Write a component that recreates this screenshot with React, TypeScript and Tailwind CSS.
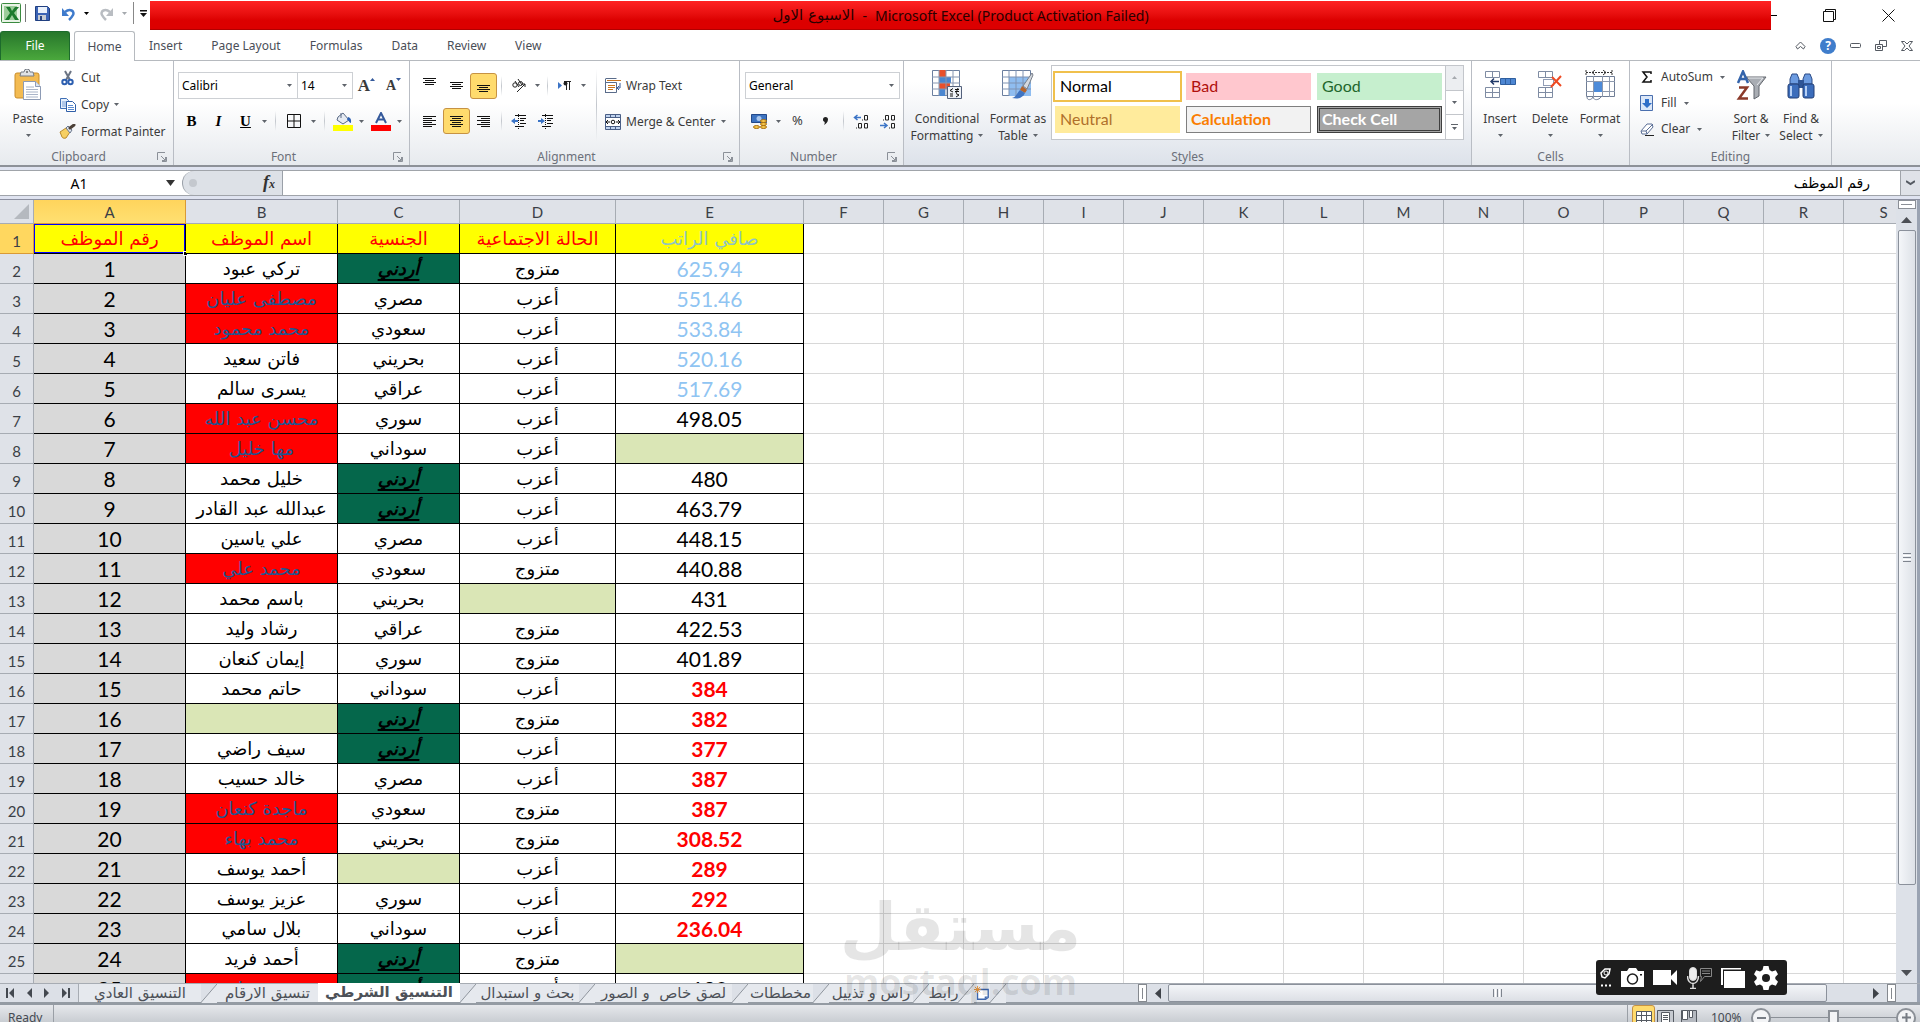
import React from "react";

type Cell = string | null;

interface Row {
  name: Cell;
  nameHit?: boolean;
  nation: Cell;
  status: Cell;
  salary: Cell;
}

const rows: Row[] = [
  { name: "تركي عبود", nation: "أردني", status: "متزوج", salary: "625.94" },
  { name: "مصطفى عليان", nameHit: true, nation: "مصري", status: "أعزب", salary: "551.46" },
  { name: "محمد محمود", nameHit: true, nation: "سعودي", status: "أعزب", salary: "533.84" },
  { name: "فاتن سعيد", nation: "بحريني", status: "أعزب", salary: "520.16" },
  { name: "يسرى سالم", nation: "عراقي", status: "أعزب", salary: "517.69" },
  { name: "محسن عبد الله", nameHit: true, nation: "سوري", status: "أعزب", salary: "498.05" },
  { name: "مها خليل", nameHit: true, nation: "سوداني", status: "أعزب", salary: null },
  { name: "خليل محمد", nation: "أردني", status: "أعزب", salary: "480" },
  { name: "عبدالله عبد القادر", nation: "أردني", status: "أعزب", salary: "463.79" },
  { name: "علي ياسين", nation: "مصري", status: "أعزب", salary: "448.15" },
  { name: "محمد علي", nameHit: true, nation: "سعودي", status: "متزوج", salary: "440.88" },
  { name: "باسم محمد", nation: "بحريني", status: null, salary: "431" },
  { name: "رشاد وليد", nation: "عراقي", status: "متزوج", salary: "422.53" },
  { name: "إيمان كنعان", nation: "سوري", status: "متزوج", salary: "401.89" },
  { name: "حاتم محمد", nation: "سوداني", status: "أعزب", salary: "384" },
  { name: null, nation: "أردني", status: "متزوج", salary: "382" },
  { name: "سيف راضي", nation: "أردني", status: "أعزب", salary: "377" },
  { name: "خالد حسيب", nation: "مصري", status: "أعزب", salary: "387" },
  { name: "ماجدة كنعان", nameHit: true, nation: "سعودي", status: "متزوج", salary: "387" },
  { name: "محمد بهاء", nameHit: true, nation: "بحريني", status: "متزوج", salary: "308.52" },
  { name: "أحمد يوسف", nation: null, status: "أعزب", salary: "289" },
  { name: "عزيز يوسف", nation: "سوري", status: "أعزب", salary: "292" },
  { name: "بلال سامي", nation: "سوداني", status: "أعزب", salary: "236.04" },
  { name: "أحمد فريد", nation: "أردني", status: "متزوج", salary: null },
  { name: "محمد علي", nameHit: true, nation: "أردني", status: "أعزب", salary: "190" },
];

const dataColumns = ["A", "B", "C", "D", "E"];
const emptyColumns = ["F", "G", "H", "I", "J", "K", "L", "M", "N", "O", "P", "Q", "R", "S"];
const headings = ["رقم الموظف", "اسم الموظف", "الجنسية", "الحالة الاجتماعية", "صافي الراتب"];

const Caret = ({ className = "text-[#5f646b]" }: { className?: string }) => (
  <svg width="5" height="3" viewBox="0 0 5 3" className={`shrink-0 ${className}`}>
    <path d="M0 0h5L2.5 3z" fill="currentColor" />
  </svg>
);

const CaretButton = ({ label }: { label: string }) => (
  <button aria-label={label} className="flex h-[26px] w-[11px] items-center justify-center">
    <Caret />
  </button>
);

const Sep = ({ className = "w-[10px]" }: { className?: string }) => (
  <span className={`flex h-[20px] justify-center ${className}`}>
    <span className="w-px bg-gradient-to-b from-transparent via-[#c3c7cd] to-transparent" />
  </span>
);

interface ToolProps {
  label: string;
  active?: boolean;
  className?: string;
  children: React.ReactNode;
}

const Tool: React.FC<ToolProps> = ({ label, active, className = "w-[27px]", children }) => (
  <button
    aria-label={label}
    className={`flex h-[26px] shrink-0 items-center justify-center rounded-[3px] ${
      active ? "border border-[#c69243] bg-[#ffdb6d]" : ""
    } ${className}`}
  >
    {children}
  </button>
);

interface BigToolProps {
  lines: string[];
  className: string;
  children: React.ReactNode;
}

const BigTool: React.FC<BigToolProps> = ({ lines, className, children }) => (
  <button className={`flex shrink-0 flex-col items-center pt-[8px] ${className}`}>
    <span className="flex h-[32px] items-center">{children}</span>
    <span className="mt-[9px] whitespace-nowrap leading-[17px]">{lines[0]}</span>
    <span className="flex h-[17px] items-center gap-[5px] whitespace-nowrap leading-[17px]">
      {lines[1]}
      <Caret />
    </span>
  </button>
);

interface GroupProps {
  title: string;
  className: string;
  launcher?: boolean;
  children: React.ReactNode;
}

const Group: React.FC<GroupProps> = ({ title, className, launcher, children }) => (
  <section className={`flex shrink-0 flex-col border-r border-[#b9bdc4] ${className}`}>
    <div className="flex flex-1">{children}</div>
    <div className="flex h-[16px] items-center leading-[16px] text-[#6b707a]">
      <span className="flex-1 text-center">{title}</span>
      {launcher && (
        <button aria-label={`${title} settings`} className="mr-[6px]">
          <svg width="10" height="10" viewBox="0 0 10 10" fill="none" stroke="#8b9098">
            <path d="M.5 8V.5H8" />
            <path d="M4 4l4 4M8.500 5v3.500H5" />
            <path d="M5 9.500h4.500V5" />
          </svg>
        </button>
      )}
    </div>
  </section>
);

const Picker = ({ label, value, className }: { label: string; value: string; className: string }) => (
  <span className={`relative flex h-[27px] items-center border border-[#cdd0d4] bg-white ${className}`}>
    <select
      aria-label={label}
      defaultValue={value}
      className="h-full w-full appearance-none bg-transparent pl-[3px] text-black outline-none"
    >
      <option>{value}</option>
    </select>
    <span className="pointer-events-none absolute right-[5px]">
      <Caret />
    </span>
  </span>
);

const Lines = ({ rows: lineRows, top = 0 }: { rows: number[][]; top?: number }) => (
  <svg width="15" height="15" viewBox="0 0 15 15" stroke="#111">
    {lineRows.map(([x, w], i) => (
      <path key={i} d={`M${x} ${top + i * 2 + 0.5}h${w}`} />
    ))}
  </svg>
);

const BorderIcon = () => (
  <svg width="14" height="14" viewBox="0 0 14 14" fill="none" stroke="#111">
    <path d="M.5.5h13v13H.5zM7 0v14M0 7h14" />
  </svg>
);

const IndentIcon = ({ flip }: { flip?: boolean }) => (
  <svg width="16" height="15" viewBox="0 0 16 15">
    <path d="M4 1.500h11M9 4.500h6M9 6.500h4M9 9.500h6M4 12.500h9" stroke="#111" />
    <path d="M7.500 0v15" stroke="#111" strokeDasharray="1 1" />
    <path d={flip ? "M0 6h3V4l4 3-4 3V8H0z" : "M7 6H4V4L0 7l4 3V8h3z"} fill="#3b74c6" />
  </svg>
);

const PasteIcon = () => (
  <svg width="28" height="32" viewBox="0 0 28 32">
    <rect x="1" y="4" width="24" height="25" rx="2" fill="#f3bb52" stroke="#c98d2b" />
    <path d="M7 3h3a3 3 0 016 0h3l1 4H6z" fill="#dfe2e6" stroke="#777d86" />
    <circle cx="13" cy="3" r="1" fill="#666" />
    <path d="M9.500 12.500h12l5 5v13h-17z" fill="#fff" stroke="#8d9bb5" />
    <path d="M21.500 12.500v5h5" fill="#dce5f2" stroke="#8d9bb5" />
    <path d="M12 18h8M12 20.500h12M12 23h12M12 25.500h12M12 28h12" stroke="#a9b4c8" />
  </svg>
);

const CutIcon = () => (
  <svg width="14" height="16" viewBox="0 0 14 16" fill="none">
    <path d="M4 1l5 9M10 1L5 10" stroke="#6b7484" strokeWidth="2" />
    <circle cx="3.500" cy="12" r="2.200" stroke="#2d5fb0" strokeWidth="2" />
    <circle cx="9.500" cy="12" r="2.200" stroke="#2d5fb0" strokeWidth="2" />
  </svg>
);

const CopyIcon = () => (
  <svg width="16" height="14" viewBox="0 0 16 14">
    <path d="M.5.500h6l2 2v8h-8z" fill="#e6effb" stroke="#3f6fb5" />
    <path d="M2 4h5M2 6h5M2 8h5" stroke="#7ba0d6" />
    <path d="M6.500 3.500h6l3 3v7h-9z" fill="#fff" stroke="#2f5fa8" />
    <path d="M8 7.500h5M8 9.500h6M8 11.500h6" stroke="#5b8bd0" />
  </svg>
);

const PainterIcon = () => (
  <svg width="17" height="15" viewBox="0 0 17 15">
    <path d="M1 8l6-4 4 4-4 6c-3 1-4-1-4-1z" fill="#f6cf62" stroke="#b98a2d" />
    <path d="M7 4l2-2 4 4-2 3z" fill="#dfe5ee" stroke="#69768c" />
    <path d="M11 4l4-3" stroke="#4b4038" strokeWidth="3" strokeLinecap="round" />
  </svg>
);

const FillIcon = () => (
  <svg width="20" height="19" viewBox="0 0 20 19">
    <path d="M5 5l5-4 6 7-6 4-6-4z" fill="#e5eaf2" stroke="#5a6a85" />
    <path d="M8 6V1" stroke="#5a6a85" />
    <path d="M15 5c4 1 3 5 3 6-2 0-2-3-4-3z" fill="#2f62b5" />
    <path d="M0 13h20v6H0z" fill="#ff0" />
  </svg>
);

const FontColorIcon = () => (
  <svg width="20" height="19" viewBox="0 0 20 19">
    <path d="M5 11L10 1l5 10M7 7.500h6" fill="none" stroke="#34599b" strokeWidth="2" />
    <path d="M0 13h20v6H0z" fill="#f00" />
  </svg>
);

const WrapIcon = () => (
  <svg width="16" height="16" viewBox="0 0 16 16" fill="none">
    <path d="M.5 1v14M.5 4.500h11v10H.5M.5.500h11" stroke="#5a6c8a" />
    <path d="M2 2.500h14" stroke="#c9741c" />
    <path d="M3 7.500h7M3 9.500h7M3 11.500h5" stroke="#c9741c" />
    <path d="M15 5v5h-3m2-2l-2 2 2 2" stroke="#34599b" />
  </svg>
);

const MergeIcon = () => (
  <svg width="16" height="16" viewBox="0 0 16 16">
    <path d="M.5.500h15v15H.5z" fill="#bfd2ee" stroke="#4a5f86" />
    <path d="M.5 3.500h15M.5 12.500h15M5.500.500v3M10.500.500v3M5.500 12.500v3M10.500 12.500v3" stroke="#4a5f86" />
    <path d="M1 4h14v8H1z" fill="#fff" />
    <path d="M1 8h4M3 6L1 8l2 2M15 8h-4M13 6l2 2-2 2" stroke="#111" fill="none" />
    <circle cx="8" cy="8" r="1.800" fill="none" stroke="#111" />
  </svg>
);

const MoneyIcon = () => (
  <svg width="17" height="17" viewBox="0 0 17 17">
    <path d="M.5 1.500h15v8H.5z" fill="#3d73c0" stroke="#23498a" />
    <circle cx="8" cy="5.500" r="2.500" fill="#a9c7ee" />
    <ellipse cx="12.500" cy="8" rx="3" ry="1.500" fill="#f5c54a" stroke="#a86f10" />
    <ellipse cx="12.500" cy="11" rx="3" ry="1.500" fill="#f5c54a" stroke="#a86f10" />
    <ellipse cx="12.500" cy="14" rx="3" ry="1.500" fill="#f5c54a" stroke="#a86f10" />
    <ellipse cx="5.500" cy="14" rx="3" ry="1.500" fill="#f5c54a" stroke="#a86f10" />
  </svg>
);

const DecimalIcon = ({ more }: { more?: boolean }) => (
  <svg width="17" height="15" viewBox="0 0 17 15" fill="none">
    <g stroke="#222">
      {more ? (
        <path d="M9 6h1M11.500 1.500h3v4.500h-3zM3 14h1M5.500 9.500h3V14h-3zM11.500 9.500h3V14h-3z" />
      ) : (
        <path d="M3 6h1M5.500 1.500h3v4.500h-3zM11.500 1.500h3v4.500h-3zM9 14h1M11.500 9.500h3V14h-3z" />
      )}
    </g>
    <path
      d={more ? "M8 3.500H2M4.500 1L1.500 3.500l3 2.500" : "M0 11.500h6M4 9l3 2.500L4 14"}
      stroke="#3b74c6"
      strokeWidth="1.500"
    />
  </svg>
);

const ConditionalIcon = () => (
  <svg width="30" height="30" viewBox="0 0 30 30">
    <path d="M.5.500h27v25H.5z" fill="#fff" stroke="#6b7f9f" />
    <path d="M7 0h7v7H7zM7 13h11v6H7z" fill="#e8502b" />
    <path d="M7 7h12v6H7zM7 19h6v7H7z" fill="#4a86d0" />
    <path d="M0 7h28M0 13h28M0 19h28M7 0v26M14 0v26M21 0v26" stroke="#8797b2" />
    <path d="M15.500 16.500h14v12h-14z" fill="#eef2f8" stroke="#53617b" />
    <path d="M21 18.500l-3 2 3 1.500M18 24h3M18 26h3M23 19.500h4M23 21.500h4M26 18l-2 5M24 23.500l3 1.500-3 2" stroke="#111" fill="none" />
  </svg>
);

const FormatTableIcon = () => (
  <svg width="32" height="30" viewBox="0 0 32 30">
    <path d="M.5.500h28v25H.5z" fill="#fff" stroke="#6b7f9f" />
    <path d="M7 7h22v19H7z" fill="#8fbdf0" />
    <path d="M0 7h29M0 13h29M0 19h29M7 0v26M14 0v26M21 0v26" stroke="#7f93b3" />
    <path d="M30 3l-9 13 4 3 6-14z" fill="#d5d9df" stroke="#787f8a" />
    <path d="M20 16l5 4-2 3-5-3z" fill="#b5652b" />
    <path d="M18 20l5 3c-3 6-8 6-13 5 4-1 5-5 8-8z" fill="#3f74c2" />
  </svg>
);

const InsertCellsIcon = () => (
  <svg width="32" height="30" viewBox="0 0 32 30" fill="none">
    <path d="M1.500 1.500h14v6h-14zM8.500 1.500v6M1.500 17.500h14v10h-14zM8.500 17.500v10M1.500 22.500h14" fill="#fff" stroke="#7f8ca3" />
    <path d="M16.500 8.500h15v6h-15z" fill="#4d86d2" stroke="#2f5f9f" />
    <path d="M21.500 8.500v6M26.500 8.500v6" stroke="#2f5f9f" />
    <path d="M15 11.500H7M10 8.500l-3 3 3 3" stroke="#223a6a" strokeWidth="1.500" />
  </svg>
);

const DeleteCellsIcon = () => (
  <svg width="26" height="30" viewBox="0 0 26 30" fill="none">
    <path d="M1.500 1.500h14v6h-14zM8.500 1.500v6M1.500 17.500h14v10h-14zM8.500 17.500v10M1.500 22.500h14" fill="#fff" stroke="#7f8ca3" />
    <path d="M6.500 9.500h10v6h-10z" stroke="#223a6a" strokeDasharray="1 1" />
    <path d="M15 7l9 9M24 6l-10 11" stroke="#ee4a22" strokeWidth="2" />
  </svg>
);

const FormatCellsIcon = () => (
  <svg width="31" height="31" viewBox="0 0 31 31" fill="none">
    <path d="M1 2.500h26M1 0v5M27 0v5" stroke="#333" strokeDasharray="2 1" />
    <path d="M10 0l-3 2.500L10 5M18 0l3 2.500L18 5" stroke="#333" />
    <path d="M1.500 6.500h28v20h-28z" fill="#fff" stroke="#6f7d95" />
    <path d="M1 11.500h29M1 21.500h29M8.500 6v21M17.500 6v21M24.500 6v21" stroke="#8d99ae" />
    <path d="M9 12h8v10H9z" fill="#4d8bd9" />
    <path d="M2 27c0 4 5 3 6 0 1 4 6 3 8 0" stroke="#6f7d95" fill="#fff" />
  </svg>
);

const SortIcon = () => (
  <svg width="31" height="31" viewBox="0 0 31 31" fill="none">
    <path d="M10 7h20l-7 9v10l-5 3V16z" fill="#a9adb3" stroke="#63676e" />
    <path d="M12 8h15l-6 7" stroke="#e8eaee" />
    <path d="M2 13L7 1.500 12 13M4 9h6" stroke="#3464ab" strokeWidth="2.500" />
    <path d="M3 17.500h8L3 28.500h9" stroke="#8b3a2a" strokeWidth="2.500" />
  </svg>
);

const FindIcon = () => (
  <svg width="28" height="27" viewBox="0 0 28 27">
    <path d="M5 2h5l2 5v5H3V7zM18 2h5l2 5v5h-9V7z" fill="#6c9be0" stroke="#2a4a86" />
    <path d="M11 8h6v8h-6z" fill="#2f5596" />
    <rect x="1" y="12" width="11" height="14" rx="2" fill="#3c6dbb" stroke="#223f75" />
    <rect x="16" y="12" width="11" height="14" rx="2" fill="#3c6dbb" stroke="#223f75" />
    <path d="M4 14v10M19 14v10" stroke="#b5cff5" strokeWidth="2" />
  </svg>
);

const QuickAccess = () => (
  <div className="flex h-[26px] w-[150px] shrink-0 items-center self-start">
    <svg width="21" height="21" viewBox="0 0 21 21" className="ml-px">
      <rect x=".5" y=".5" width="19" height="19" rx="1" fill="#e9f3e6" stroke="#3a8a3f" />
      <path d="M3 3h13v14H3z" fill="#9ccc9a" />
      <path d="M5 4h4l2 4 3-4h4l-5 6 5 7h-4l-3-5-3 5H4l5-7z" fill="#1d7a2d" />
    </svg>
    <span className="ml-[3px] h-[18px] w-px bg-[#777]" />
    <button aria-label="Save" className="ml-[9px]">
      <svg width="15" height="15" viewBox="0 0 15 15">
        <path d="M.5.500h12l2 2v12H.5z" fill="#3b63b5" stroke="#203f80" />
        <path d="M3 1h9v6H3z" fill="#eaf1fb" />
        <path d="M3 9h8v5H3z" fill="#c6cbd3" />
        <path d="M5 10h2v4H5z" fill="#26437f" />
      </svg>
    </button>
    <button aria-label="Undo" className="ml-[12px]">
      <svg width="13" height="15" viewBox="0 0 13 15" fill="none">
        <path d="M3 6c5-4 10-1 8 3-1 2-3 4-4 5" stroke="#3f7bcc" strokeWidth="2.500" />
        <path d="M0 2v8h7z" fill="#3f7bcc" />
      </svg>
    </button>
    <button aria-label="Undo history" className="ml-[9px]">
      <Caret className="text-black" />
    </button>
    <button aria-label="Redo" className="ml-[11px]">
      <svg width="13" height="15" viewBox="0 0 13 15" fill="none">
        <path d="M10 6C5 2 0 5 2 9c1 2 3 4 4 5" stroke="#b9bdc2" strokeWidth="2.500" />
        <path d="M13 2v8H6z" fill="#b9bdc2" />
      </svg>
    </button>
    <button aria-label="Redo history" className="ml-[9px]">
      <Caret className="text-[#a5a9ae]" />
    </button>
    <span className="ml-[6px] h-[22px] w-px bg-[#888]" />
    <button aria-label="Customize toolbar" className="ml-[6px]">
      <svg width="7" height="7" viewBox="0 0 7 7">
        <path d="M0 0h7v1.500H0zM0 3h7L3.500 7z" fill="#111" />
      </svg>
    </button>
  </div>
);

const TitleBar = () => (
  <header className="flex h-[31px] shrink-0 items-center">
    <QuickAccess />
    <div className="flex h-[29px] flex-1 items-center justify-center gap-[8px] border-b border-[#b00000] bg-gradient-to-b from-[#ff2222] to-[#dc0000] to-70% text-[14px] text-[#2a0000]">
      <span dir="rtl" className="font-['DejaVu_Sans',sans-serif] text-[15px]">الاسبوع الاول</span>
      <span>-</span>
      <span>Microsoft Excel (Product Activation Failed)</span>
    </div>
    <div className="flex w-[149px] shrink-0 items-center">
      <button aria-label="Minimize" className="h-px w-[6px] bg-black" />
      <button aria-label="Restore" className="ml-[46px]">
        <svg width="13" height="13" viewBox="0 0 13 13" fill="none" stroke="#111">
          <path d="M.5 2.500h10v10H.5zM2.500 2V.500h10v10H11" />
        </svg>
      </button>
      <button aria-label="Close" className="ml-[46px]">
        <svg width="13" height="13" viewBox="0 0 13 13" fill="none" stroke="#111">
          <path d="M.5.500l12 12M12.500.500l-12 12" />
        </svg>
      </button>
    </div>
  </header>
);

const tabs = ["Insert", "Page Layout", "Formulas", "Data", "Review", "View"];

const TabRow = () => (
  <nav className="flex h-[30px] shrink-0 items-stretch border-b border-[#b6babf] text-[#4a4e57]">
    <button className="w-[70px] rounded-t-[3px] border border-b-0 border-[#1c6b2c] bg-gradient-to-b from-[#27772c] to-[#4aa83c] text-white">
      File
    </button>
    <button className="-mb-px ml-[4px] w-[61px] rounded-t-[3px] border border-b-0 border-[#b6babf] bg-white">
      Home
    </button>
    <div className="flex gap-[29px] pl-[14px]">
      {tabs.map((tab) => (
        <button key={tab}>{tab}</button>
      ))}
    </div>
    <div className="ml-auto flex items-center gap-[14px] pr-[7px]">
      <svg width="11" height="9" viewBox="0 0 11 9" fill="#fff" stroke="#555a62">
        <path d="M5.500 1L1 5.500 2.500 8l3-2.500 3 2.500L10 5.500z" />
      </svg>
      <button
        aria-label="Help"
        className="flex h-[16px] w-[16px] items-center justify-center rounded-full bg-[#3f7dcb] font-bold text-white"
      >
        ?
      </button>
      <svg width="11" height="6" viewBox="0 0 11 6" fill="none" stroke="#555a62">
        <rect x=".5" y=".5" width="10" height="4" rx="1" />
      </svg>
      <svg width="12" height="11" viewBox="0 0 12 11" fill="none" stroke="#555a62">
        <path d="M.5 4.500h7v6h-7zM2.500 6.500h3v2h-3zM4.500 4V.500h7v6H8" />
      </svg>
      <svg width="12" height="10" viewBox="0 0 12 10" fill="#fff" stroke="#555a62">
        <path d="M.5.500h3L6 3 8.500.500h3L8 5l3.500 4.500h-3L6 7 3.500 9.500h-3L4 5z" />
      </svg>
    </div>
  </nav>
);

const StyleSwatch = ({ name, className }: { name: string; className: string }) => (
  <button className={`h-[27px] w-[125px] text-left font-['Lato',sans-serif] text-[16px] leading-[20px] ${className}`}>
    {name}
  </button>
);

const Ribbon = () => (
  <div className="flex h-[106px] shrink-0 border-b-2 border-[#8d9198] bg-gradient-to-b from-white from-40% to-[#e7eaee] text-[#3b3b3b]">
    <Group title="Clipboard" launcher className="w-[174px]">
      <BigTool lines={["Paste", ""]} className="w-[56px]">
        <PasteIcon />
      </BigTool>
      <div className="flex flex-col pl-[3px] pt-[4px]">
        <button className="flex h-[26px] items-center gap-[5px]">
          <span className="flex w-[17px] justify-center"><CutIcon /></span>
          Cut
        </button>
        <button className="flex h-[27px] items-center gap-[5px]">
          <span className="flex w-[17px] justify-center"><CopyIcon /></span>
          Copy
          <Caret />
        </button>
        <button className="flex h-[27px] items-center gap-[5px] whitespace-nowrap">
          <PainterIcon />
          Format Painter
        </button>
      </div>
    </Group>

    <Group title="Font" launcher className="w-[236px]">
      <div className="flex flex-col gap-[9px] pl-[4px] pt-[11px]">
        <div className="flex items-center">
          <Picker label="Font name" value="Calibri" className="w-[120px]" />
          <Picker label="Font size" value="14" className="-ml-px w-[56px]" />
          <Tool label="Grow font">
            <span className="font-['Liberation_Serif',serif] text-[17px] font-bold">A</span>
            <svg width="5" height="3" viewBox="0 0 5 3" className="mb-[12px]"><path d="M0 3h5L2.500 0z" fill="#34599b" /></svg>
          </Tool>
          <Tool label="Shrink font">
            <span className="font-['Liberation_Serif',serif] text-[14px] font-bold">A</span>
            <svg width="5" height="3" viewBox="0 0 5 3" className="mb-[12px]"><path d="M0 0h5L2.500 3z" fill="#34599b" /></svg>
          </Tool>
        </div>
        <div className="flex items-center font-['Liberation_Serif',serif] text-[15px] text-black">
          <Tool label="Bold"><b>B</b></Tool>
          <Tool label="Italic"><b><i>I</i></b></Tool>
          <Tool label="Underline"><b className="underline">U</b></Tool>
          <CaretButton label="Underline style" />
          <Sep />
          <Tool label="Borders" className="w-[28px]"><BorderIcon /></Tool>
          <CaretButton label="Border style" />
          <Sep />
          <Tool label="Fill colour"><FillIcon /></Tool>
          <CaretButton label="More fill colours" />
          <Tool label="Font colour"><FontColorIcon /></Tool>
          <CaretButton label="More font colours" />
        </div>
      </div>
    </Group>

    <Group title="Alignment" launcher className="w-[330px]">
      <div className="flex w-[186px] flex-col gap-[9px] pl-[6px] pt-[11px]">
        <div className="flex h-[27px] items-center">
          <Tool label="Top align"><Lines rows={[[1, 13], [3, 9], [1, 13], [3, 9]]} /></Tool>
          <Tool label="Middle align"><Lines top={4} rows={[[1, 13], [3, 9], [1, 13], [3, 9]]} /></Tool>
          <Tool label="Bottom align" active><Lines top={7} rows={[[1, 13], [3, 9], [1, 13], [3, 9]]} /></Tool>
          <Sep className="w-[8px]" />
          <Tool label="Orientation">
            <svg width="16" height="16" viewBox="0 0 16 16" fill="none" stroke="#222">
              <circle cx="4" cy="7" r="2.200" />
              <path d="M4 3l4 6M7 1l4 6M6 14l8-8M11 6h3v3" />
              <circle cx="9.500" cy="5.500" r="2" />
            </svg>
          </Tool>
          <CaretButton label="More orientations" />
          <Sep className="w-[8px]" />
          <Tool label="Text direction">
            <svg width="13" height="10" viewBox="0 0 13 10">
              <path d="M0 1v7l4-3.500z" fill="#3b74c6" />
              <path d="M8.500 0v9M11.500 0v9M6 .500h7" stroke="#222" fill="none" />
              <circle cx="7.500" cy="2.500" r="2" fill="#222" />
            </svg>
          </Tool>
          <CaretButton label="More text directions" />
        </div>
        <div className="flex items-center">
          <Tool label="Align left"><Lines top={2} rows={[[1, 13], [1, 9], [1, 13], [1, 9], [1, 13], [1, 9]]} /></Tool>
          <Tool label="Centre" active><Lines top={2} rows={[[1, 13], [3, 9], [1, 13], [3, 9], [1, 13], [3, 9]]} /></Tool>
          <Tool label="Align right"><Lines top={2} rows={[[1, 13], [5, 9], [1, 13], [5, 9], [1, 13], [5, 9]]} /></Tool>
          <Sep className="w-[8px]" />
          <Tool label="Decrease indent"><IndentIcon /></Tool>
          <Tool label="Increase indent"><IndentIcon flip /></Tool>
        </div>
      </div>
      <div className="my-[8px] w-px bg-gradient-to-b from-transparent via-[#c3c7cd] to-transparent" />
      <div className="flex flex-col gap-[9px] pl-[8px] pt-[11px]">
        <button className="flex h-[27px] items-center gap-[5px] whitespace-nowrap">
          <WrapIcon />
          Wrap Text
        </button>
        <button className="flex h-[27px] items-center gap-[5px] whitespace-nowrap">
          <MergeIcon />
          Merge &amp; Center
          <Caret />
        </button>
      </div>
    </Group>

    <Group title="Number" launcher className="w-[164px]">
      <div className="flex flex-col gap-[9px] pl-[5px] pt-[11px]">
        <Picker label="Number format" value="General" className="w-[155px]" />
        <div className="flex items-center">
          <Tool label="Accounting format" className="w-[28px]"><MoneyIcon /></Tool>
          <CaretButton label="More currencies" />
          <Tool label="Percent"><span className="text-[13px]">%</span></Tool>
          <Tool label="Comma style" className="w-[28px]">
            <svg width="5" height="8" viewBox="0 0 5 8"><path d="M0 2.500a2.500 2.500 0 015 0C5 5 3 7 1 8c1-2 1-3 0-3.500A2 2 0 010 2.500z" fill="#222" /></svg>
          </Tool>
          <Sep className="w-[9px]" />
          <Tool label="Increase decimal"><DecimalIcon more /></Tool>
          <Tool label="Decrease decimal"><DecimalIcon /></Tool>
        </div>
      </div>
    </Group>

    <Group title="Styles" className="w-[568px] bg-gradient-to-b from-white from-20% to-[#dde2ea]">
      <div className="flex pl-[5px]">
        <BigTool lines={["Conditional", "Formatting"]} className="w-[76px]"><ConditionalIcon /></BigTool>
        <BigTool lines={["Format as", "Table"]} className="w-[66px]"><FormatTableIcon /></BigTool>
        <div className="mt-[4px] flex h-[75px] border border-[#c3c6cb] bg-white">
          <div className="grid grid-cols-3 content-center gap-x-[6px] gap-y-[6px] px-[3px]">
            <StyleSwatch name="Normal" className="bg-white pl-[5px] text-black outline-2 outline-[#f0c04c]" />
            <StyleSwatch name="Bad" className="bg-[#ffc7ce] pl-[5px] text-[#b0100c]" />
            <StyleSwatch name="Good" className="bg-[#c6efce] pl-[5px] text-[#22662c]" />
            <StyleSwatch name="Neutral" className="bg-[#ffeb9c] pl-[5px] text-[#b0702a]" />
            <StyleSwatch name="Calculation" className="border border-[#7f7f7f] bg-[#f2f2f2] pl-[4px] font-bold text-[#fa7d00]" />
            <StyleSwatch name="Check Cell" className="border-[3px] border-double border-[#3f3f3f] bg-[#a5a5a5] pl-[2px] font-bold text-white" />
          </div>
          <div className="flex w-[18px] flex-col divide-y divide-[#c3c6cb] border-l border-[#c3c6cb]">
            <button aria-label="Previous styles" className="flex flex-1 items-center justify-center bg-[#eceef1]">
              <svg width="5" height="3" viewBox="0 0 5 3"><path d="M0 3h5L2.500 0z" fill="#a5a9ae" /></svg>
            </button>
            <button aria-label="Next styles" className="flex flex-1 items-center justify-center"><Caret /></button>
            <button aria-label="All styles" className="flex flex-1 items-center justify-center">
              <svg width="7" height="6" viewBox="0 0 7 6"><path d="M0 0h7v1H0zM1 3h5L3.500 6z" fill="#5f646b" /></svg>
            </button>
          </div>
        </div>
      </div>
    </Group>

    <Group title="Cells" className="w-[158px]">
      <div className="flex pl-[3px]">
        <BigTool lines={["Insert", ""]} className="w-[50px]"><InsertCellsIcon /></BigTool>
        <BigTool lines={["Delete", ""]} className="w-[50px]"><DeleteCellsIcon /></BigTool>
        <BigTool lines={["Format", ""]} className="w-[50px]"><FormatCellsIcon /></BigTool>
      </div>
    </Group>

    <Group title="Editing" className="w-[202px]">
      <div className="flex w-[96px] flex-col pl-[10px] pt-[3px]">
        <button className="flex h-[26px] items-center gap-[7px]">
          <svg width="14" height="12" viewBox="0 0 14 12" fill="none" stroke="#111" strokeWidth="1.500">
            <path d="M11 3V1H3l4 5-4 5h8V9" />
          </svg>
          AutoSum
          <Caret />
        </button>
        <button className="flex h-[26px] items-center gap-[7px]">
          <svg width="14" height="16" viewBox="0 0 14 16">
            <path d="M.5.500h12v15H.5z" fill="#dbe7f8" stroke="#4a6fae" />
            <path d="M5 4h4v4h3l-5 5-5-5h3z" fill="#2f6fc8" />
          </svg>
          Fill
          <Caret />
        </button>
        <button className="flex h-[26px] items-center gap-[7px]">
          <svg width="14" height="13" viewBox="0 0 14 13" fill="#fff" stroke="#5b6f96">
            <path d="M1 8l6-7h5l1 3-6 7H2z" />
            <path d="M1 8h5l7-7M6 8l1 3" />
            <path d="M5 12.500h9" stroke="#222" />
          </svg>
          Clear
          <Caret />
        </button>
      </div>
      <BigTool lines={["Sort &", "Filter"]} className="w-[50px]"><SortIcon /></BigTool>
      <BigTool lines={["Find &", "Select"]} className="w-[50px]"><FindIcon /></BigTool>
    </Group>
  </div>
);

const FormulaBar = () => (
  <div className="shrink-0 border-b border-[#8b8fa0] bg-[#dfe3f0] pb-[3px] pt-[3px]">
    <div className="flex h-[26px] border-y border-[#a0a4aa] bg-white">
      <input aria-label="Name box" defaultValue="A1" className="w-[158px] bg-transparent text-center text-[14px] text-black outline-none" />
      <button aria-label="Name list" className="flex w-[24px] items-center justify-center">
        <svg width="9" height="6" viewBox="0 0 9 6"><path d="M0 0h9L4.500 6z" fill="#333" /></svg>
      </button>
      <div className="flex w-[101px] items-center justify-between rounded-l-full border-l border-r border-[#9aa0a8] bg-[#dde1e7] pl-[6px] pr-[7px]">
        <span className="h-[8px] w-[8px] rounded-full bg-[#c4c8ce]" />
        <button className="font-['Liberation_Serif',serif] text-[18px] font-bold italic leading-[22px] text-[#333]">
          f<span className="text-[12px]">x</span>
        </button>
      </div>
      <input
        aria-label="Formula"
        dir="rtl"
        defaultValue="رقم الموظف"
        className="min-w-0 flex-1 bg-transparent pr-[30px] text-right font-['DejaVu_Sans',sans-serif] text-[14px] text-black outline-none"
      />
      <button aria-label="Expand formula bar" className="flex w-[20px] items-center justify-center border-l border-[#a0a4aa] bg-[#dfe2e8]">
        <svg width="9" height="6" viewBox="0 0 9 6" fill="none"><path d="M0 1l4.500 3L9 1" stroke="#555a62" strokeWidth="2" /></svg>
      </button>
    </div>
  </div>
);

interface DataCellProps {
  value: Cell;
  className: string;
}

const DataCell: React.FC<DataCellProps> = ({ value, className }) => (
  <td
    className={`border-b border-r border-black p-0 text-center ${
      value === null ? "bg-[#dae6b6]" : className
    }`}
  >
    <div className="h-[29px] overflow-hidden whitespace-nowrap leading-[30px]">{value}</div>
  </td>
);

const salaryStyle = (salary: Cell) => {
  const n = Number(salary);
  if (n > 500) return "text-[#8fc4f2]";
  if (n > 200 && n < 400) return "font-bold text-[#ff0000]";
  return "text-black";
};

const arabic = "font-['DejaVu_Sans',sans-serif] text-[18px]";

const Sheet = () => (
  <div className="min-w-0 flex-1 overflow-hidden">
    <table className="w-[1924px] table-fixed border-separate border-spacing-0 bg-white font-['Lato',sans-serif] text-[21px]">
      <colgroup>
        <col className="w-[34px]" />
        <col className="w-[152px]" />
        <col className="w-[152px]" />
        <col className="w-[122px]" />
        <col className="w-[156px]" />
        <col className="w-[188px]" />
        {emptyColumns.map((c) => (
          <col key={c} className="w-[80px]" />
        ))}
      </colgroup>
      <thead>
        <tr className="h-[24px] text-[15px] leading-[22px] text-[#3b3f46]">
          <td className="border-b border-r border-[#a7acb3] bg-[#dfe2e8] p-0">
            <svg width="15" height="15" viewBox="0 0 15 15" className="ml-auto mr-[4px]">
              <path d="M15 0v15H0z" fill="#b5b9bf" />
            </svg>
          </td>
          {[...dataColumns, ...emptyColumns].map((c) => (
            <th
              key={c}
              className={`border-b border-r p-0 font-normal ${
                c === "A"
                  ? "border-[#d99a35] bg-gradient-to-b from-[#ffd45c] to-[#ffe071]"
                  : "border-[#a7acb3] bg-[#dfe2e8]"
              }`}
            >
              {c}
            </th>
          ))}
        </tr>
      </thead>
      <tbody>
        <tr className="h-[30px]">
          <th className="border-b border-r border-[#d99a35] bg-[#ffd75f] p-0 pt-[4px] text-[15px] font-normal leading-[20px] text-[#3b3f46]">
            1
          </th>
          {headings.map((h, i) => (
            <td
              key={h}
              className={`relative border-b border-r border-black bg-[#ffff00] p-0 text-center ${arabic} ${
                i === 4 ? "text-[#8fc4c4]" : "text-[#ff0000]"
              }`}
            >
              <div className="h-[29px] overflow-hidden whitespace-nowrap leading-[30px]">{h}</div>
              {i === 0 && (
                <>
                  <span className="absolute inset-0 border border-[#0000ff]" />
                  <span className="absolute -bottom-[3px] -right-[3px] h-[5px] w-[5px] border border-white bg-black" />
                </>
              )}
            </td>
          ))}
          {emptyColumns.map((c) => (
            <td key={c} className="border-b border-r border-[#d8d8d8] p-0" />
          ))}
        </tr>
        {rows.map((row, i) => (
          <tr key={i} className="h-[30px]">
            <th className="border-b border-r border-[#a7acb3] bg-[#dfe2e8] p-0 pt-[4px] text-[15px] font-normal leading-[20px] text-[#3b3f46]">
              {i + 2}
            </th>
            <DataCell value={String(i + 1)} className="bg-[#d9d9d9] text-black" />
            <DataCell
              value={row.name}
              className={row.nameHit ? `${arabic} bg-[#ff0000] text-[#1f5590]` : `${arabic} text-black`}
            />
            <DataCell
              value={row.nation}
              className={
                row.nation === "أردني"
                  ? `${arabic} bg-[#05674b] font-bold italic text-black underline decoration-2 underline-offset-4 [text-decoration-skip-ink:none]`
                  : `${arabic} text-black`
              }
            />
            <DataCell value={row.status} className={`${arabic} text-black`} />
            <DataCell value={row.salary} className={salaryStyle(row.salary)} />
            {emptyColumns.map((c) => (
              <td key={c} className="border-b border-r border-[#d8d8d8] p-0" />
            ))}
          </tr>
        ))}
      </tbody>
    </table>
  </div>
);

const VerticalScroll = () => (
  <div className="flex w-[24px] shrink-0 flex-col items-center border-r-[3px] border-[#9aa3b2] bg-[#dde1e8]">
    <span className="flex h-[9px] w-[18px] items-center justify-center border border-[#8b8f96] bg-white">
      <span className="h-px w-[11px] bg-[#8b8f96]" />
    </span>
    <button aria-label="Scroll up" className="flex h-[21px] items-center">
      <svg width="11" height="6" viewBox="0 0 11 6"><path d="M0 6h11L5.500 0z" fill="#4c4f55" /></svg>
    </button>
    <span className="flex h-[655px] w-[18px] flex-col items-center justify-center gap-px rounded-[2px] border border-[#8b919b] bg-gradient-to-r from-[#f4f6f9] to-[#dde1e7]">
      <span className="h-px w-[8px] bg-[#7e848e]" />
      <span className="h-px w-[8px] bg-white" />
      <span className="h-px w-[8px] bg-[#7e848e]" />
      <span className="h-px w-[8px] bg-white" />
      <span className="h-px w-[8px] bg-[#7e848e]" />
    </span>
    <button aria-label="Scroll down" className="mt-auto flex h-[21px] items-center">
      <svg width="11" height="6" viewBox="0 0 11 6"><path d="M0 0h11L5.500 6z" fill="#4c4f55" /></svg>
    </button>
  </div>
);

const sheetTabs = [
  { name: "التنسيق العادي", width: "w-[122px]" },
  { name: "تنسيق الارقام", width: "w-[101px]" },
  { name: "التنسيق الشرطي", width: "w-[142px]" },
  { name: "بحث و استبدال", width: "w-[103px]" },
  { name: "لصق خاص  و الصور", width: "w-[137px]" },
  { name: "مخططات", width: "w-[65px]" },
  { name: "راس و تذييل", width: "w-[84px]" },
  { name: "رابط", width: "w-[29px]" },
];

const Slash = () => (
  <svg width="16" height="19" viewBox="0 0 16 19" className="shrink-0">
    <path d="M0 18L16 0v19H1z" fill="#e6e9ee" />
    <path d="M0 18.500L16 0" stroke="#8f959d" fill="none" />
  </svg>
);

const navButtons = [
  { label: "First sheet", path: "M1 0h2v10H1zM9 0v10L4 5z" },
  { label: "Previous sheet", path: "M8 0v10L3 5z" },
  { label: "Next sheet", path: "M2 0v10l5-5z" },
  { label: "Last sheet", path: "M1 0v10l5-5zM7 0h2v10H7z" },
];

const SheetTabs = () => (
  <div className="flex h-[22px] shrink-0 border-b-[3px] border-[#949ba3] bg-[#dce0e7]">
    <div className="flex w-[79px] items-center justify-between border-r border-t border-[#a7acb3] pl-[5px] pr-[7px]">
      {navButtons.map(({ label, path }) => (
        <button key={label} aria-label={label}>
          <svg width="10" height="10" viewBox="0 0 10 10"><path d={path} fill="#444950" /></svg>
        </button>
      ))}
    </div>
    <div className="flex flex-1 border-t border-[#a7acb3] font-['DejaVu_Sans',sans-serif] text-[15px] leading-[18px] text-[#4d5158]">
      {sheetTabs.map((tab, i) => (
        <React.Fragment key={tab.name}>
          <button
            className={`flex shrink-0 justify-center whitespace-pre ${tab.width} ${
              i === 2 ? "-mt-px bg-white font-bold" : "bg-[#e6e9ee]"
            }`}
          >
            {tab.name}
          </button>
          {i !== 1 && <Slash />}
        </React.Fragment>
      ))}
      <button aria-label="Insert sheet" className="flex w-[16px] shrink-0 items-center bg-[#e6e9ee]">
        <svg width="18" height="17" viewBox="0 0 18 17">
          <path d="M4 4h12v9l-3 2H4z" fill="#fff" stroke="#3d66ad" strokeWidth="1.500" />
          <path d="M12 15v-3h4" fill="#3d66ad" />
          <path d="M4 0v8M0 4h8M1 1l6 6M7 1L1 7" stroke="#e38b2c" />
        </svg>
      </button>
      <Slash />
    </div>
    <div className="flex w-[782px] shrink-0 items-stretch border-t border-[#a7acb3]">
      <span className="flex w-[9px] items-center justify-center border border-[#85898f] bg-white">
        <span className="h-[11px] w-px bg-[#85898f]" />
      </span>
      <button aria-label="Scroll left" className="flex w-[21px] items-center justify-center">
        <svg width="6" height="11" viewBox="0 0 6 11"><path d="M6 0v11L0 5.500z" fill="#3f4349" /></svg>
      </button>
      <span className="flex w-[659px] items-center justify-center gap-px rounded-[2px] border border-[#8b919b] bg-gradient-to-b from-[#f3f5f8] to-[#dcdfe5]">
        <span className="h-[8px] w-px bg-[#7e848e]" />
        <span className="h-[8px] w-px bg-white" />
        <span className="h-[8px] w-px bg-[#7e848e]" />
        <span className="h-[8px] w-px bg-white" />
        <span className="h-[8px] w-px bg-[#7e848e]" />
      </span>
      <button aria-label="Scroll right" className="ml-auto mr-[8px] flex items-center">
        <svg width="6" height="11" viewBox="0 0 6 11"><path d="M0 0v11l6-5.500z" fill="#3f4349" /></svg>
      </button>
      <span className="flex w-[9px] items-center justify-center border border-[#85898f] bg-white">
        <span className="h-[11px] w-px bg-[#85898f]" />
      </span>
      <span className="w-[24px] border-r-[3px] border-[#9aa3b2] bg-[#dde1e8]" />
    </div>
  </div>
);

const StatusBar = () => (
  <footer className="flex h-[17px] shrink-0 overflow-hidden bg-gradient-to-b from-[#e6e8ec] to-[#c9cdd2] text-[#454a52]">
    <div className="flex h-[25px] w-full items-center">
      <span className="w-[53px] pl-[8px]">Ready</span>
      <span className="h-full w-px bg-[#9a9fa6]" />
      <div className="ml-auto flex h-full items-center">
        <span className="h-full w-px bg-[#9a9fa6]" />
        <button aria-label="Normal view" className="ml-[4px] flex h-full w-[23px] items-center justify-center rounded-[3px] border border-[#c69243] bg-[#ffdb6d]">
          <svg width="16" height="14" viewBox="0 0 16 14" fill="#fff" stroke="#555a62">
            <path d="M.5.500h15v13H.5zM5.500 0v14M10.500 0v14M0 4.500h16M0 9.500h16" />
          </svg>
        </button>
        <button aria-label="Page layout view" className="ml-[2px] w-[17px]">
          <svg width="17" height="15" viewBox="0 0 17 15" fill="#fff" stroke="#555a62">
            <path d="M.5.500h16v14H.5z" fill="#c6cad0" />
            <path d="M4.500 2.500h8v12h-8zM6 5.500h5M6 7.500h5M6 9.500h5" />
          </svg>
        </button>
        <button aria-label="Page break view" className="ml-[7px] w-[16px]">
          <svg width="16" height="15" viewBox="0 0 16 15" fill="#fff" stroke="#555a62">
            <path d="M.5.500h15v14H.5z" fill="#b5b9c0" />
            <path d="M1.500.500h5v9h-5zM8.500.500h3v7h-3z" />
          </svg>
        </button>
        <span className="ml-[14px] w-[40px]">100%</span>
        <button aria-label="Zoom out" className="flex h-[20px] w-[20px] items-center justify-center rounded-full border-2 border-[#8b9097] bg-[#f3f4f6]">
          <span className="h-[2px] w-[9px] bg-[#777c84]" />
        </button>
        <input
          type="range"
          aria-label="Zoom"
          defaultValue={50}
          className="h-[20px] w-[125px] appearance-none bg-[linear-gradient(#8b9097,#8b9097)] bg-[length:100%_1px] bg-center bg-no-repeat [&::-webkit-slider-thumb]:h-[16px] [&::-webkit-slider-thumb]:w-[11px] [&::-webkit-slider-thumb]:appearance-none [&::-webkit-slider-thumb]:rounded-b-[5px] [&::-webkit-slider-thumb]:border-2 [&::-webkit-slider-thumb]:border-[#8b9097] [&::-webkit-slider-thumb]:bg-[#f3f4f6]"
        />
        <button aria-label="Zoom in" className="mr-[4px] flex h-[20px] w-[20px] items-center justify-center rounded-full border-2 border-[#8b9097] bg-[#f3f4f6]">
          <svg width="9" height="9" viewBox="0 0 9 9"><path d="M4.500 0v9M0 4.500h9" stroke="#777c84" strokeWidth="2" /></svg>
        </button>
      </div>
    </div>
  </footer>
);

const Watermark = () => (
  <div className="pointer-events-none absolute bottom-[22px] left-[845px] flex w-[231px] flex-col items-center font-bold text-black/10">
    <span className="font-['DejaVu_Sans',sans-serif] text-[66px] leading-[72px]">مستقل</span>
    <span className="font-['Open_Sans',sans-serif] text-[36px] leading-[36px]">mostaql.com</span>
  </div>
);

const RecorderBar = () => (
  <div className="absolute bottom-[27px] right-[133px] flex h-[35px] w-[191px] items-center justify-between rounded-[3px] bg-[#1d1d1d] pl-[4px] pr-[9px] text-white">
    <svg width="12" height="20" viewBox="0 0 12 20" fill="none" stroke="#fff">
      <path d="M2 9l-1-4 4-4h5l-1 5-4 4z" strokeWidth="1.500" />
      <circle cx="6" cy="5" r="2" />
      <path d="M1 17.500h2M5 17.500h2M9 17.500h2" strokeWidth="2" />
    </svg>
    <button aria-label="Screenshot">
      <svg width="23" height="19" viewBox="0 0 23 19" fill="#fff">
        <path d="M0 3h6l2-3h7l2 3h6v16H0z" />
        <circle cx="11.500" cy="11" r="5" fill="#fff" stroke="#1d1d1d" strokeWidth="1.500" />
        <path d="M19 6h2v1.500h-2z" fill="#1d1d1d" />
      </svg>
    </button>
    <button aria-label="Record video">
      <svg width="24" height="17" viewBox="0 0 24 17" fill="#fff"><path d="M0 1h18v15H0zM18 7l6-6v15l-6-6z" /></svg>
    </button>
    <button aria-label="Microphone">
      <svg width="25" height="22" viewBox="0 0 25 22" fill="none" stroke="#ddd">
        <rect x="2.500" y=".5" width="7" height="13" rx="3.500" fill="#eee" />
        <path d="M.5 9c0 10 11 10 11 0M6 16v5M3 21.500h6" strokeWidth="1.500" />
        <path d="M13.500 1.500h11v8h-7l-4 5 1-5h-1z" stroke="#888" />
        <path d="M15 4h8M15 6.500h8" stroke="#888" />
      </svg>
    </button>
    <button aria-label="Windows">
      <svg width="24" height="20" viewBox="0 0 24 20" fill="#fff"><path d="M0 0h20v1.500H2V17H0zM3 3h21v17H3z" /></svg>
    </button>
    <button aria-label="Settings">
      <svg width="24" height="24" viewBox="0 0 24 24" fill="#fff">
        <path d="M9.500 0h5l1 4 2.500 1.400 3.800-1.200 2.200 4-2.700 2.800v2l2.700 2.800-2.200 4-3.800-1.200L15.500 20l-1 4h-5l-1-4L6 18.600l-3.800 1.200-2.200-4L2.700 13v-2L0 8.200l2.200-4L6 5.400 8.500 4z" />
        <circle cx="12" cy="12" r="4" fill="#1d1d1d" />
      </svg>
    </button>
  </div>
);

export default function App() {
  return (
    <div className="relative flex h-screen flex-col overflow-hidden bg-white font-['Noto_Sans',sans-serif] text-[12px]">
      <TitleBar />
      <TabRow />
      <Ribbon />
      <FormulaBar />
      <main className="flex min-h-0 flex-1">
        <Sheet />
        <VerticalScroll />
      </main>
      <SheetTabs />
      <StatusBar />
      <Watermark />
      <RecorderBar />
    </div>
  );
}
